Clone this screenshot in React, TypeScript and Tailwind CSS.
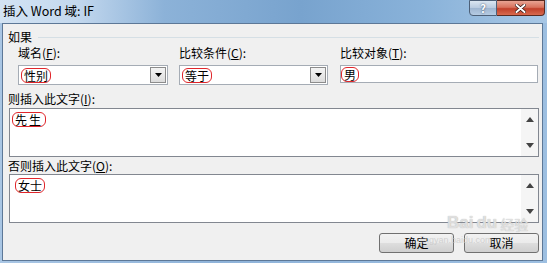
import React from 'react'

const cjk = { fontFamily: '"Noto Sans CJK SC", "Liberation Sans", sans-serif' }

function Mark({ children, className = '' }: { children: React.ReactNode; className?: string }) {
  return (
    <span className={`inline-block rounded-[6px] border-[1.5px] border-[#e0262b] px-[2px] leading-[13px] ${className}`}>
      {children}
    </span>
  )
}

function DropArrow() {
  return (
    <div className="flex h-full w-[16px] items-center justify-center border border-[#8c8c8c] bg-[linear-gradient(#f4f4f4,#dcdcdc)]">
      <svg width="7" height="4" viewBox="0 0 7 4">
        <path d="M0 0h7L3.5 4z" fill="#000" />
      </svg>
    </div>
  )
}

function Combo({ width, children }: { width: string; children: React.ReactNode }) {
  return (
    <div className={`flex h-[20px] ${width} items-stretch border border-[#a5acb5] bg-white p-[1px]`}>
      <div className="flex flex-1 items-center pl-[1px]">{children}</div>
      <DropArrow />
    </div>
  )
}

function Scrollbar() {
  return (
    <div className="flex w-[17px] flex-col items-center justify-between bg-[#f5f5f5] py-[8px]">
      <svg width="8" height="5" viewBox="0 0 8 5">
        <path d="M4 0L8 5H0z" fill="#444" />
      </svg>
      <svg width="8" height="5" viewBox="0 0 8 5">
        <path d="M0 0h8L4 5z" fill="#444" />
      </svg>
    </div>
  )
}

function TextBox({ children, height }: { children: React.ReactNode; height: string }) {
  return (
    <div className={`ml-[6px] flex ${height} w-[530px] border border-[#828790] bg-white`}>
      <div className="flex-1 pl-[5px] pt-[2px]">{children}</div>
      <Scrollbar />
    </div>
  )
}

function Label({ text, hot }: { text: string; hot: string }) {
  return (
    <div className="h-[16px] text-[12px] leading-[16px] text-black">
      {text}(<span className="underline">{hot}</span>):
    </div>
  )
}

function WinButton({ children }: { children: React.ReactNode }) {
  return (
    <button className="flex h-[20px] w-[75px] items-center justify-center rounded-[3px] border border-[#707070] bg-[linear-gradient(#f2f2f2_0%,#ebebeb_48%,#dddddd_52%,#cfcfcf_100%)] text-[12px] text-black">
      {children}
    </button>
  )
}

export default function App() {
  return (
    <div
      style={cjk}
      className="relative h-[263px] w-[547px] overflow-hidden bg-[linear-gradient(90deg,#a9c6e4_0%,#8fb3d9_40%,#9dbfe1_100%)]"
    >
      {/* title bar */}
      <div className="flex h-[23px] items-start bg-[linear-gradient(90deg,#d3e3f3_0%,#c3d8ee_14%,#8cb2d8_30%,#78a3ce_55%,#8ab3da_78%,#a8c7e5_100%)]">
        <div className="pl-[3px] pt-[2px] text-[12.5px] leading-[17px] text-black">插入 Word 域: IF</div>
        <div className="ml-auto mr-[2px] flex">
          <div className="flex h-[16px] w-[28px] items-center justify-center rounded-bl-[4px] border border-[#4d6078] bg-[linear-gradient(#dbe6f1_0%,#b9cbe0_48%,#9fb6d1_52%,#b5cbe3_100%)] text-[11px] font-bold leading-none text-white [text-shadow:0_0_2px_#2c3f57]">
            ?
          </div>
          <div className="flex h-[16px] w-[48px] items-center justify-center rounded-br-[4px] border border-l-0 border-[#5a2a20] bg-[linear-gradient(#e8a493_0%,#d8725d_45%,#c1402a_55%,#d86a4f_100%)]">
            <svg width="11" height="9" viewBox="0 0 11 9">
              <path d="M1.5 1l8 7M9.5 1l-8 7" stroke="#2e1410" strokeWidth="3.4" strokeLinecap="round" />
              <path d="M1.5 1l8 7M9.5 1l-8 7" stroke="#fff" strokeWidth="2" strokeLinecap="round" />
            </svg>
          </div>
        </div>
      </div>

      {/* client area */}
      <div className="ml-[2px] flex h-[238px] w-[541px] flex-col border border-[#5d7897] bg-[#f0f0f0] text-[12px]">
        <div className="mt-[5px] flex h-[16px] items-center pl-[5px] leading-[16px]">
          <span>如果</span>
          <div className="ml-[6px] mr-[3px] h-px flex-1 bg-[#d5dfe5]" />
        </div>

        <div className="flex pl-[15px]">
          <div className="flex w-[150px] flex-col">
            <Label text="域名" hot="F" />
            <div className="mt-[4px]">
              <Combo width="w-[150px]">
                <Mark>性别</Mark>
              </Combo>
            </div>
          </div>
          <div className="ml-[11px] flex w-[149px] flex-col">
            <Label text="比较条件" hot="C" />
            <div className="mt-[4px]">
              <Combo width="w-[149px]">
                <Mark>等于</Mark>
              </Combo>
            </div>
          </div>
          <div className="ml-[12px] flex w-[198px] flex-col">
            <Label text="比较对象" hot="T" />
            <div className="mt-[4px] flex h-[18px] w-[198px] items-center border border-[#a5acb5] bg-white">
              <Mark className="ml-0">男</Mark>
            </div>
          </div>
        </div>

        <div className="mt-[6px] pl-[5px]">
          <Label text="则插入此文字" hot="I" />
        </div>
        <div className="mt-[1px]">
          <TextBox height="h-[49px]">
            <Mark className="ml-[-3px] tracking-[2px]">先生</Mark>
          </TextBox>
        </div>

        <div className="mt-[1px] pl-[5px]">
          <Label text="否则插入此文字" hot="O" />
        </div>
        <div>
          <TextBox height="h-[49px]">
            <Mark>女士</Mark>
          </TextBox>
        </div>

        <div className="mt-[10px] flex justify-end gap-[10px] pr-[3px]">
          <WinButton>确定</WinButton>
          <WinButton>取消</WinButton>
        </div>
      </div>

      {/* watermark */}
      <div className="pointer-events-none absolute left-[447px] top-[214px] flex items-end text-[17px] font-bold leading-none text-[#ececec]/80 [text-shadow:0_0_1px_#a8a8a8]">
        <span style={{ fontFamily: '"Liberation Sans", sans-serif' }}>Bai</span>
        <span className="ml-[3px]" style={{ fontFamily: '"Liberation Sans", sans-serif' }}>du</span>
        <span className="ml-[3px] text-[14px] font-normal">经验</span>
      </div>
      <div
        className="pointer-events-none absolute left-[420px] top-[236px] text-[9px] leading-none text-[#c4c4c4]/70"
        style={{ fontFamily: '"Liberation Sans", sans-serif' }}
      >
        jingyan.baidu.com
      </div>
    </div>
  )
}
